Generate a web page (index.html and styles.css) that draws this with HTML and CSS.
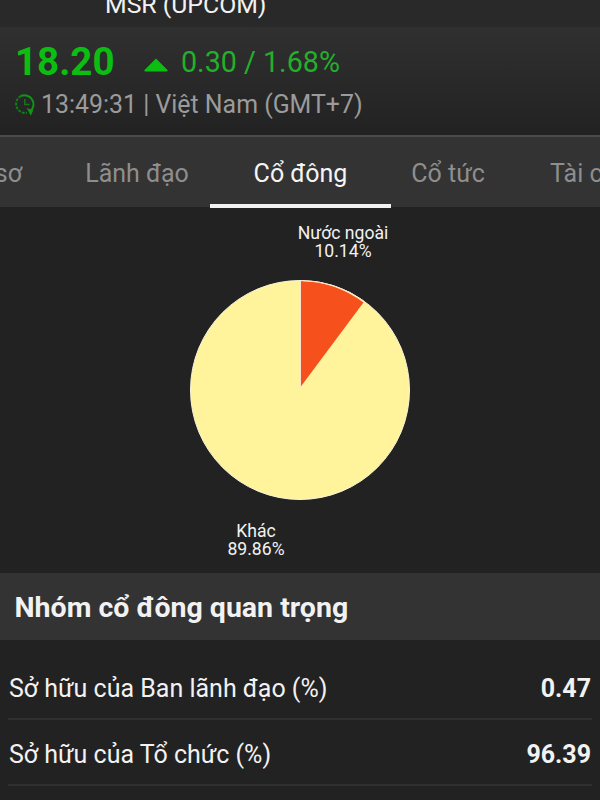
FILE: index.html
```html
<!DOCTYPE html>
<html lang="vi">
<head>
<meta charset="utf-8">
<title>MSR (UPCOM)</title>
<link rel="stylesheet" href="styles.css">
</head>
<body>
<header class="topbar"><h1 class="symbol">MSR (UPCOM)</h1></header>
<section class="quote">
  <div class="price-row">
    <span class="price">18.20</span>
    <svg class="arrow" width="26" height="14" viewBox="0 0 26 14"><path d="M13 0.5 24.5 12Q25 13.5 23.5 13.5H2.5Q1 13.5 1.5 12Z" fill="#0cbe12"/></svg>
    <span class="change">0.30 / 1.68%</span>
  </div>
  <div class="time-row">
    <svg class="clock" width="22" height="24" viewBox="0 0 22 24" fill="none">
      <path d="M6 3A9 9 0 0 1 15.5 18" stroke="#119517" stroke-width="2"/>
      <path d="M6 3A9 9 0 0 0 12 19.8" stroke="#128018" stroke-width="2" stroke-dasharray="2.8 1.3"/>
      <path d="M11.8 15 18.3 17.2 15.7 22.8Z" fill="#119517"/>
      <path d="M9.8 6V11.5H14.5" stroke="#127917" stroke-width="1.5"/>
    </svg>
    <span class="time">13:49:31 | Việt Nam (GMT+7)</span>
  </div>
</section>
<nav class="tabs">
  <span class="tab tab-first">Hồ sơ</span>
  <span class="tab">Lãnh đạo</span>
  <span class="tab active">Cổ đông</span>
  <span class="tab">Cổ tức</span>
  <span class="tab tab-last">Tài chính</span>
</nav>
<section class="chart">
  <div class="label label-foreign">Nước ngoài<br>10.14%</div>
  <svg class="pie" width="222" height="222" viewBox="0 0 222 222">
    <circle cx="111" cy="111" r="109.5" fill="#fff49c" stroke="#f8f5d8" stroke-width="1"/>
    <path d="M111.5 108V2A109 109 0 0 1 174.5 23.5Z" fill="#f6511d"/>
    <path d="M111.5 109V1.5A109.5 109.5 0 0 1 175.2 22.3" fill="none" stroke="#f8e5cf" stroke-width="1"/>
  </svg>
  <div class="label label-other">Khác<br>89.86%</div>
</section>
<h2 class="group-title">Nhóm cổ đông quan trọng</h2>
<div class="rows">
  <div class="row"><span>Sở hữu của Ban lãnh đạo (%)</span><b>0.47</b></div>
  <div class="row"><span>Sở hữu của Tổ chức (%)</span><b>96.39</b></div>
</div>
</body>
</html>
```
FILE: styles.css
```css
* { box-sizing: border-box; }
body {
  margin: 0;
  width: 600px;
  height: 800px;
  overflow: hidden;
  background: #222;
  color: #f2f2f2;
  font-family: Roboto, sans-serif;
}
.topbar { height: 27px; overflow: hidden; background: #292929; }
.symbol {
  margin: -8px 0 0 105px;
  font-size: 24.8px;
  line-height: 25px;
  font-weight: 400;
}
.quote {
  height: 108px;
  padding: 14px 0 0 15px;
  background: linear-gradient(#303030, #222);
}
.price-row { display: flex; align-items: center; height: 42px; color: #0cbe12; }
.price { width: 128px; font-size: 38.5px; line-height: 42px; font-weight: 700; }
.arrow { margin-top: 5px; }
.change { margin-left: 12px; font-size: 28.7px; line-height: 41px; color: #22b02a; }
.time-row { display: flex; align-items: center; height: 42px; color: #9b9b9b; }
.clock { margin-top: 2px; }
.time { margin: 1px 0 0 4px; font-size: 24.9px; white-space: nowrap; }
.tabs {
  display: grid;
  grid-template-columns: 64px 146px 181px 114px 95px;
  height: 72px;
  border-top: 2px solid #4b4b4b;
  background: #333;
  color: #8e8e8e;
  font-size: 25px;
  line-height: 73px;
  text-align: center;
}
.tab { white-space: nowrap; }
.tab-first { display: flex; justify-content: flex-end; padding-right: 42px; }
.tab-last { padding-left: 45px; text-align: left; overflow: hidden; }
.active { height: 71px; border-bottom: 4px solid #f2f2f2; color: #f5f5f5; }
.chart { height: 366px; padding-top: 17px; }
.label { width: 120px; font-size: 17.6px; line-height: 18px; text-align: center; }
.label-foreign { margin-left: 283px; }
.pie { display: block; margin: 19px 0 0 189px; }
.label-other { margin: 21px 0 0 196px; }
.group-title {
  height: 67px;
  margin: 0;
  padding-left: 14.5px;
  background: #333;
  font-size: 28.5px;
  line-height: 70px;
  font-weight: 700;
  white-space: nowrap;
}
.rows { padding: 14px 8px 0; }
.row {
  display: flex;
  justify-content: space-between;
  height: 66px;
  padding: 0 1px;
  border-bottom: 2px solid #303030;
  font-size: 25px;
  line-height: 69px;
}
.row b { font-weight: 700; }
```
